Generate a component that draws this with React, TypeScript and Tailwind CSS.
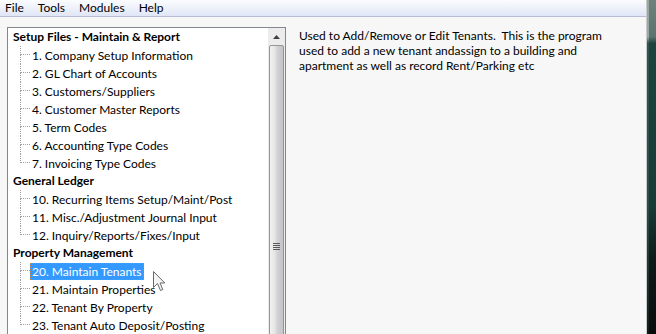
const FONT = "font-['Lato','Noto_Sans',sans-serif]"

type Item = { label: string; selected?: boolean }
type Group = { title: string; items: Item[] }

const GROUPS: Group[] = [
  {
    title: 'Setup Files - Maintain & Report',
    items: [
      { label: '1. Company Setup Information' },
      { label: '2. GL Chart of Accounts' },
      { label: '3. Customers/Suppliers' },
      { label: '4. Customer Master Reports' },
      { label: '5. Term Codes' },
      { label: '6. Accounting Type Codes' },
      { label: '7. Invoicing Type Codes' },
    ],
  },
  {
    title: 'General Ledger',
    items: [
      { label: '10. Recurring Items Setup/Maint/Post' },
      { label: '11. Misc./Adjustment Journal Input' },
      { label: '12. Inquiry/Reports/Fixes/Input' },
    ],
  },
  {
    title: 'Property Management',
    items: [
      { label: '20. Maintain Tenants', selected: true },
      { label: '21. Maintain Properties' },
      { label: '22. Tenant By Property' },
      { label: '23. Tenant Auto Deposit/Posting' },
    ],
  },
]

function TreeItem({ item, last }: { item: Item; last: boolean }) {
  return (
    <div className="flex h-[18px] items-stretch pl-[7px]">
      {/* tree connector */}
      <div className="flex w-[10px] shrink-0 flex-col">
        <div className="h-[9px] border-b border-l border-dotted border-[#a0a0a0]" />
        <div className={`flex-1 ${last ? '' : 'border-l border-dotted border-[#a0a0a0]'}`} />
      </div>
      <div className="flex items-center">
        <span
          className={
            item.selected
              ? 'border border-dotted border-[#d0803a] bg-[#3399ff] px-px leading-[15px] text-white'
              : 'px-[2px] leading-[15px] text-black'
          }
        >
          {item.label}
        </span>
      </div>
    </div>
  )
}

function Cursor() {
  return (
    <svg width="13" height="21" viewBox="0 0 13 21" className="pointer-events-none absolute left-[145px] top-[243px]">
      <path
        d="M0.5 0.5 L0.5 16.5 L4.5 12.5 L7.5 19.5 L9.8 18.5 L7 12 L11.8 12 Z"
        fill="#f4f4f4"
        stroke="#6a6a6a"
        strokeWidth="1"
        strokeLinejoin="round"
      />
    </svg>
  )
}

function Scrollbar() {
  return (
    <div className="flex w-[17px] shrink-0 flex-col bg-[#ececec]">
      <div className="flex h-[17px] items-center justify-center">
        <svg width="7" height="4" viewBox="0 0 7 4">
          <path d="M3.5 0 L7 4 L0 4 Z" fill="#404040" />
        </svg>
      </div>
      {/* thumb */}
      <div className="mx-px flex flex-1 flex-col rounded-[2px] border border-[#959595] bg-[linear-gradient(to_right,#f2f2f2_0%,#e6e6e6_35%,#cfcfd4_60%,#c4c4c9_100%)]">
        <div className="h-[197px]" />
        <div className="flex flex-col items-center gap-px">
          <div className="h-px w-[7px] bg-[#5a5a5a]" />
          <div className="h-px w-[7px] bg-[#5a5a5a]" />
          <div className="h-px w-[7px] bg-[#5a5a5a]" />
          <div className="h-px w-[7px] bg-[#5a5a5a]" />
        </div>
      </div>
    </div>
  )
}

export default function App() {
  return (
    <div className={`flex h-[334px] w-[656px] overflow-hidden text-[12px] ${FONT}`}>
      <div className="flex min-w-0 flex-1 flex-col bg-[#f7f7f7]">
        {/* menu bar */}
        <div className="flex h-[17px] shrink-0 items-center gap-[14px] border-b border-[#b9bdd6] bg-[linear-gradient(to_bottom,#fbfcfe_0%,#eef1fa_50%,#dfe5f6_100%)] pl-[5px] text-black">
          <span>File</span>
          <span>Tools</span>
          <span>Modules</span>
          <span>Help</span>
        </div>

        <div className="flex flex-1 gap-[13px] pl-[7px] pt-[10px]">
          {/* tree view */}
          <div className="relative flex h-[330px] w-[279px] shrink-0 border border-[#828790] bg-white">
            <div className="flex-1 pl-[5px]">
              {GROUPS.map(g => (
                <div key={g.title}>
                  <div className="flex h-[18px] items-center font-bold text-black">{g.title}</div>
                  {g.items.map((it, i) => (
                    <TreeItem key={it.label} item={it} last={i === g.items.length - 1} />
                  ))}
                </div>
              ))}
            </div>
            <Scrollbar />
            <Cursor />
          </div>

          {/* description */}
          <div className="pt-[1px] leading-[15px] text-black whitespace-pre">
            {'Used to Add/Remove or Edit Tenants.  This is the program\nused to add a new tenant andassign to a building and\napartment as well as record Rent/Parking etc'}
          </div>
        </div>
      </div>

      {/* window edge */}
      <div className="flex w-[10px] shrink-0">
        <div className="w-px bg-[#c8cccb]" />
        <div className="w-[2px] bg-[linear-gradient(to_bottom,#9aa8a4_0%,#9aa8a4_11%,#2e5550_13%,#2a4f4a_60%,#151d1c_100%)]" />
        <div className="flex-1 bg-[linear-gradient(to_bottom,#6d827c_0%,#5c736d_11%,#1c433d_13%,#183b36_62%,#0f1a18_78%,#0a0c0c_100%)]" />
      </div>
    </div>
  )
}
